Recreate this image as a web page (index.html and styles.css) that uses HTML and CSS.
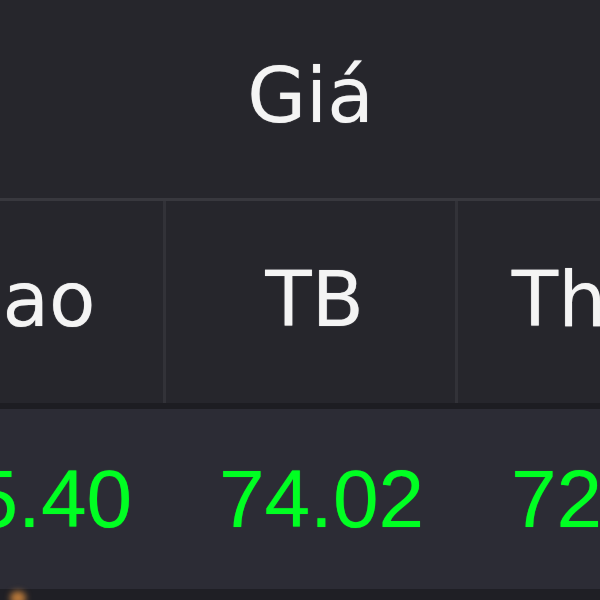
FILE: index.html
```html
<!DOCTYPE html>
<html lang="vi">
<head>
    <meta charset="UTF-8">
    <meta name="viewport" content="width=device-width, initial-scale=1.0">
    <title>Giá</title>
    <link rel="stylesheet" href="styles.css">
</head>
<body>
    <div class="board">
        <table class="price-table">
            <colgroup>
                <col class="col">
                <col class="col">
                <col class="col">
            </colgroup>
            <thead>
                <tr class="group-row">
                    <th colspan="3">Giá</th>
                </tr>
                <tr class="sub-row">
                    <th>Cao</th>
                    <th>TB</th>
                    <th>Thấp</th>
                </tr>
            </thead>
            <tbody>
                <tr class="data-row">
                    <td class="up">75.40</td>
                    <td class="up">74.02</td>
                    <td class="up">72.80</td>
                </tr>
            </tbody>
        </table>
        <div class="footer-row">
            <span class="dot"></span>
        </div>
    </div>
</body>
</html>
```

FILE: styles.css
```css
body {
    margin: 0;
    width: 600px;
    height: 600px;
    overflow: hidden;
    background-color: #26262c;
    font-family: "Liberation Sans", Arial, sans-serif;
    color: #f4f4f4;
}

.board {
    width: 600px;
    height: 600px;
    overflow: hidden;
}

.price-table {
    margin-left: -129px;
    border-collapse: collapse;
    table-layout: fixed;
    width: 876px;
}

.col {
    width: 292px;
}

.price-table th {
    font-family: "DejaVu Sans", "Liberation Sans", sans-serif;
    font-weight: normal;
    font-size: 76px;
    line-height: 1;
    text-align: center;
    padding: 0 0 0 8px;
    text-shadow: 0 0 1px rgba(255, 255, 255, 0.6);
}

.group-row th {
    height: 192px;
    padding: 0 0 6px 0;
    background-color: #26262c;
    border-bottom: 3px solid #38383e;
}

.sub-row th {
    height: 198px;
    background-color: #26262c;
    border-left: 3px solid #323238;
    border-right: 3px solid #323238;
    border-bottom: 3px solid #38383e;
    padding-bottom: 4px;
}

.data-row td {
    height: 180px;
    font-size: 82px;
    line-height: 1;
    text-align: center;
    padding: 0 0 0 22px;
    background-color: #2c2c35;
    border-top: 6px solid #1d1d22;
    text-shadow: 0 0 1px rgba(0, 255, 34, 0.6);
}

.up {
    color: #00ff22;
}

.footer-row {
    height: 20px;
    background-color: #1f1f25;
    position: relative;
}

.dot {
    position: absolute;
    left: 10px;
    top: 2px;
    width: 16px;
    height: 14px;
    border-radius: 50%;
    background-color: #b9793a;
    filter: blur(3px);
}
```
